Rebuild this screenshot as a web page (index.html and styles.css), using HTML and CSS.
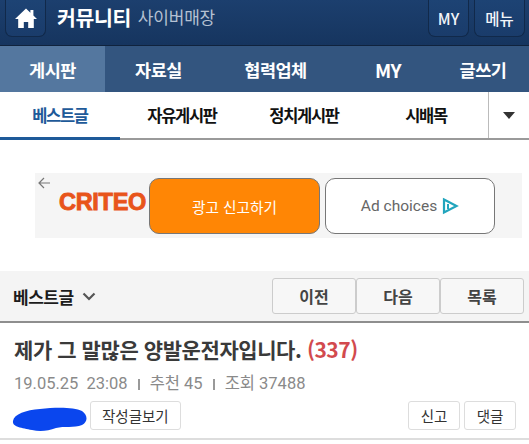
FILE: index.html
```html
<!DOCTYPE html>
<html lang="ko">
<head>
<meta charset="utf-8">
<title>커뮤니티</title>
<link rel="stylesheet" href="styles.css">
</head>
<body>
<header class="top">
  <a class="tbtn home"><svg width="24" height="24" viewBox="0 0 24 24"><path fill="#fff" d="M12 2.500 1 13h3.200v9h5.600v-6h4.400v6h5.600v-9H23l-3.600-3.400V4h-3v2.800z"/></svg></a>
  <div class="brand"><strong>커뮤니티</strong><span>사이버매장</span></div>
  <a class="tbtn my">MY</a>
  <a class="tbtn menu">메뉴</a>
</header>
<nav class="gnb">
  <a class="on">게시판</a><a>자료실</a><a>협력업체</a><a class="latin">MY</a><a>글쓰기</a>
</nav>
<nav class="sub">
  <a class="on">베스트글</a><a>자유게시판</a><a>정치게시판</a><a>시배목</a>
  <span class="more"><i></i></span>
</nav>
<section class="adwrap">
  <div class="ad">
    <svg class="back" width="14" height="14" viewBox="0 0 14 14"><path fill="none" stroke="#777" stroke-width="1.200" d="M13 7H2M7 2 2 7l5 5"/></svg>
    <span class="logo">CRITEO</span>
    <a class="adbtn report">광고 신고하기</a>
    <a class="adbtn choices">Ad choices
      <svg width="18" height="18" viewBox="0 0 18 18"><path fill="none" stroke="#22a5bd" stroke-width="2.200" d="M3 2.500 15.500 9 3 15.500z"/><path stroke="#22a5bd" stroke-width="2" d="M7 7v5"/></svg>
    </a>
  </div>
</section>
<div class="bar">
  <div class="bname">베스트글 <svg width="14" height="9" viewBox="0 0 14 9"><path fill="none" stroke="#555" stroke-width="2.200" d="m1.500 1.500 5.500 5.500 5.500-5.500"/></svg></div>
  <div class="pager"><a>이전</a><a>다음</a><a>목록</a></div>
</div>
<article class="post">
  <h1>제가 그 말많은 양발운전자입니다. <em>(337)</em></h1>
  <p class="meta"><span>19.05.25&nbsp; 23:08</span><b></b><span>추천 45</span><b></b><span>조회 37488</span></p>
  <div class="acts">
    <svg class="blot" width="78" height="26" viewBox="0 0 76 26"><path fill="#0a46ee" d="M1 15C2 8 14 4 28 3 44 1 62 1 70 5c6 4 6 11 0 14-8 3-18 1-26 3-8 3-16 4-24 2C10 22 0 21 1 15z"/></svg>
    <a class="btn">작성글보기</a>
    <a class="btn small push">신고</a>
    <a class="btn small">댓글</a>
  </div>
</article>
</body>
</html>
```
FILE: styles.css
```css
* { box-sizing: border-box; }
html, body { margin: 0; padding: 0; }
body { width: 529px; height: 444px; overflow: hidden; background: #fff; font-family: "Noto Sans CJK KR", "Noto Sans", sans-serif; color: #222; }
a { display: block; }
.top { height: 46px; display: flex; align-items: flex-start; padding: 0 4px 0 5px; gap: 5px; background: linear-gradient(#1c3f6e, #16355f); border-bottom: 1px solid #10233d; }
.tbtn { height: 37px; border: 1px solid #11294a; border-top: 0; border-radius: 0 0 7px 7px; background: linear-gradient(#1d4374, #1a3c6b); color: #f2f5f9; display: flex; align-items: center; justify-content: center; font-size: 15.500px; font-weight: 500; }
.home { width: 41px; }
.brand { flex: 1; display: flex; align-items: center; height: 33px; gap: 7px; padding-left: 6px; }
.brand strong { font-size: 20.500px; font-weight: 700; color: #fff; letter-spacing: -.4px; }
.brand span { font-size: 17px; color: #b5c1d2; font-weight: 400; letter-spacing: -.2px; }
.my { width: 41px; }
.menu { width: 51px; }
.gnb { height: 46px; display: grid; grid-template-columns: 105px 107px 127px 98px 92px; background: #33557f; }
.gnb a { display: flex; align-items: center; justify-content: center; color: #fff; font-size: 17.500px; font-weight: 700; letter-spacing: -.5px; }
.gnb .on { background: #54779f; }
.gnb .latin { font-size: 19px; }
.sub { height: 48px; display: grid; grid-template-columns: 120px 124px 120px 124px 41px; border-bottom: 2px solid #9a9a9a; }
.sub a { display: flex; align-items: center; justify-content: center; font-size: 16.500px; font-weight: 700; letter-spacing: -1.300px; color: #111; }
.sub .on { color: #1e5a99; border-bottom: 3px solid #1e5a99; margin-bottom: -2px; }
.more { border-left: 1px solid #bbb; display: flex; align-items: center; justify-content: center; }
.more i { border: 6px solid transparent; border-top: 7px solid #333; border-bottom: 0; width: 0; height: 0; }
.adwrap { height: 131px; padding: 33px 7px 0 35px; }
.ad { height: 65px; background: #f5f5f5; display: flex; align-items: flex-start; padding-top: 5px; position: relative; }
.back { position: absolute; left: 2px; top: 3px; }
.logo { width: 114px; padding: 11px 0 0 24px; font-family: "Liberation Sans", sans-serif; font-size: 23.500px; font-weight: 700; color: #e8541a; white-space: nowrap; letter-spacing: -.3px; -webkit-text-stroke: .9px #e8541a; }
.adbtn { height: 56px; width: 171px; border-radius: 10px; border: 1px solid #777; display: flex; align-items: center; justify-content: center; }
.report { background: #ff8605; color: #fff; font-size: 14.700px; margin-right: 5px; }
.choices { background: #fff; color: #666; font-size: 15.500px; gap: 4px; font-family: Roboto, sans-serif; width: 170px; }
.bar { height: 52px; background: #f4f4f4; border-bottom: 2px solid #8e8e8e; display: flex; align-items: flex-start; justify-content: space-between; padding: 7px 5px 0 13px; }
.bname { display: flex; align-items: center; gap: 8px; height: 36px; font-size: 17px; font-weight: 700; color: #1c1c1c; letter-spacing: -.5px; }
.pager { display: flex; }
.pager a { width: 84px; height: 36px; border: 1px solid #ccc; border-radius: 3px; background: #f7f7f7; display: flex; align-items: center; justify-content: center; font-size: 16px; font-weight: 700; color: #444; }
.post { padding: 11px 13px 0 14px; height: 117px; border-bottom: 2px solid #ddd; }
h1 { margin: 0; font-size: 21px; line-height: 30px; font-weight: 700; color: #3a3a3a; letter-spacing: -.42px; white-space: nowrap; }
h1 em { font-style: normal; color: #d24a4e; }
.meta { margin: 8px 0 0; display: flex; align-items: center; gap: 10px; font-size: 16.500px; line-height: 24px; color: #8a8a8a; font-family: Roboto, "Noto Sans CJK KR", sans-serif; }
.meta b { width: 2px; height: 11px; background: #999; }
.acts { display: flex; align-items: center; gap: 4px; margin-top: 2px; }
.blot { margin: 8px -3px 0 -3px; }
.btn { height: 29px; padding: 0 11px; border: 1px solid #ddd; border-radius: 3px; display: flex; align-items: center; justify-content: center; font-size: 14.500px; color: #333; }
.small { width: 52px; padding: 0; }
.push { margin-left: auto; }
```
